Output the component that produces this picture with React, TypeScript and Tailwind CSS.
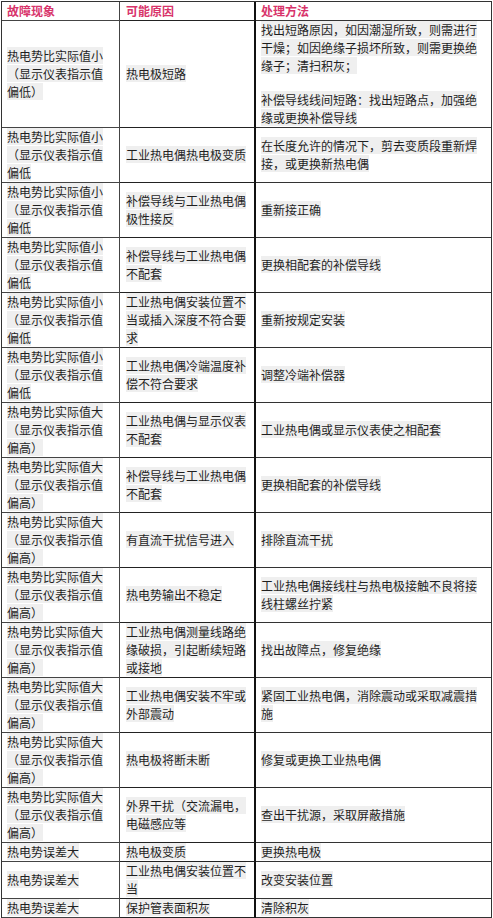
import React from 'react'

type Row = { sym: string; cause: string; fix: string[] }

const LOW = '热电势比实际值小（显示仪表指示值偏低'
const HIGH = '热电势比实际值大（显示仪表指示值偏高）'
const ERR = '热电势误差大'

const rows: Row[] = [
  {
    sym: '热电势比实际值小（显示仪表指示值偏低）',
    cause: '热电极短路',
    fix: ['找出短路原因，如因潮湿所致，则需进行干燥；如因绝缘子损坏所致，则需更换绝缘子；清扫积灰；', '', '补偿导线线间短路：找出短路点，加强绝缘或更换补偿导线'],
  },
  { sym: LOW, cause: '工业热电偶热电极变质', fix: ['在长度允许的情况下，剪去变质段重新焊接，或更换新热电偶'] },
  { sym: LOW, cause: '补偿导线与工业热电偶极性接反', fix: ['重新接正确'] },
  { sym: LOW, cause: '补偿导线与工业热电偶不配套', fix: ['更换相配套的补偿导线'] },
  { sym: LOW, cause: '工业热电偶安装位置不当或插入深度不符合要求', fix: ['重新按规定安装'] },
  { sym: LOW, cause: '工业热电偶冷端温度补偿不符合要求', fix: ['调整冷端补偿器'] },
  { sym: HIGH, cause: '工业热电偶与显示仪表不配套', fix: ['工业热电偶或显示仪表使之相配套'] },
  { sym: HIGH, cause: '补偿导线与工业热电偶不配套', fix: ['更换相配套的补偿导线'] },
  { sym: HIGH, cause: '有直流干扰信号进入', fix: ['排除直流干扰'] },
  { sym: HIGH, cause: '热电势输出不稳定', fix: ['工业热电偶接线柱与热电极接触不良将接线柱螺丝拧紧'] },
  { sym: HIGH, cause: '工业热电偶测量线路绝缘破损，引起断续短路或接地', fix: ['找出故障点，修复绝缘'] },
  { sym: HIGH, cause: '工业热电偶安装不牢或外部震动', fix: ['紧固工业热电偶，消除震动或采取减震措施'] },
  { sym: HIGH, cause: '热电极将断未断', fix: ['修复或更换工业热电偶'] },
  { sym: HIGH, cause: '外界干扰（交流漏电，电磁感应等', fix: ['查出干扰源，采取屏蔽措施'] },
  { sym: ERR, cause: '热电极变质', fix: ['更换热电极'] },
  { sym: ERR, cause: '工业热电偶安装位置不当', fix: ['改变安装位置'] },
  { sym: ERR, cause: '保护管表面积灰', fix: ['清除积灰'] },
]

function Hl({ children }: { children: React.ReactNode }) {
  return <span className="bg-[#efefef] [box-decoration-break:clone]">{children}</span>
}

const c1 = 'flex items-center border-b border-r border-[#444] pl-[5px] pr-[6px]'
const c2 = 'flex items-center border-b border-r-2 border-[#222] border-r-[#111] pl-[6px] pr-[4px]'
const c3 = 'flex flex-col justify-center border-b border-r border-[#333] pl-[5px] pr-2'

export default function App() {
  return (
    <div
      className="min-h-[918px] bg-white pl-[1px] pt-[1px] text-[12px] leading-[18px] text-[#1f1f1f]"
      style={{ fontFamily: '"Noto Sans CJK SC", "Noto Sans", sans-serif' }}
    >
      <div className="grid w-[491px] grid-cols-[118px_136px_236px] border-l border-t border-[#333]">
        <div className={c1}>
          <span className="font-bold text-[#d8346b]">故障现象</span>
        </div>
        <div className={c2}>
          <span className="font-bold text-[#d8346b]">可能原因</span>
        </div>
        <div className={c3}>
          <span className="font-bold text-[#d8346b]">处理方法</span>
        </div>

        {rows.map((r, i) => (
          <React.Fragment key={i}>
            <div className={c1}>
              <p><Hl>{r.sym}</Hl></p>
            </div>
            <div className={c2}>
              <p><Hl>{r.cause}</Hl></p>
            </div>
            <div className={c3}>
              {r.fix.map((f, j) =>
                f ? (
                  <p key={j}><Hl>{f}</Hl></p>
                ) : (
                  <p key={j} className="h-[16px]" />
                ),
              )}
            </div>
          </React.Fragment>
        ))}
      </div>
    </div>
  )
}
